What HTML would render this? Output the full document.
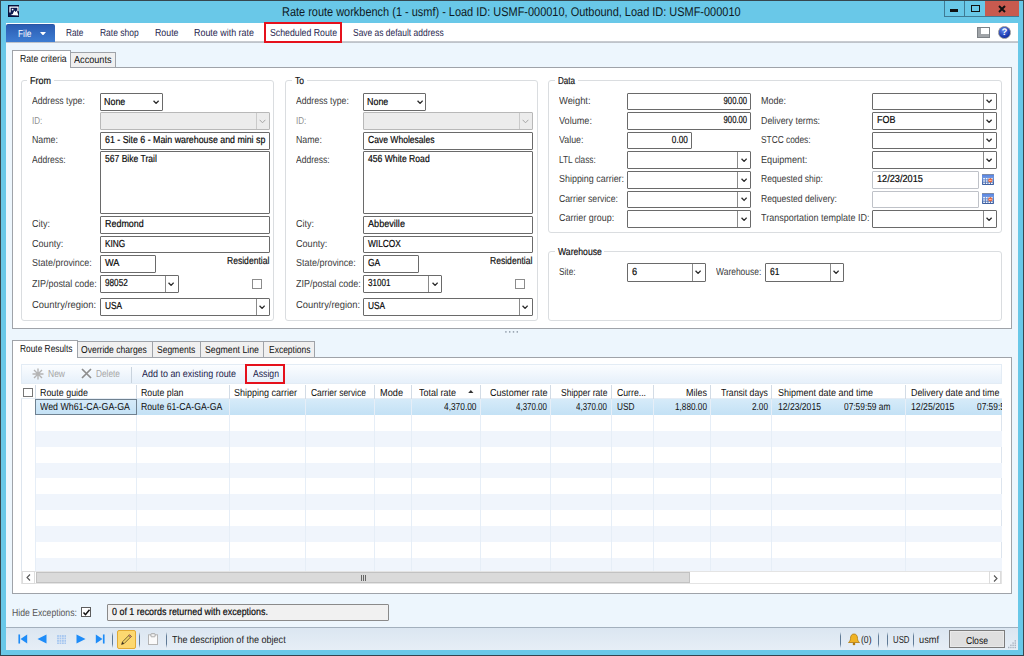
<!DOCTYPE html><html><head><meta charset="utf-8"><title>Rate route workbench</title><style>
*{box-sizing:border-box;margin:0;padding:0}
html,body{width:1024px;height:656px;overflow:hidden}
body{background:#69c8e8;font-family:"Liberation Sans",sans-serif;font-size:10.2px;text-rendering:geometricPrecision;color:#1e1e1e;position:relative}
.a{position:absolute}
.t{position:absolute;white-space:nowrap;line-height:13.5px;height:14px;transform-origin:0 0;transform:scaleX(0.9)}
.lbl{position:absolute;white-space:nowrap;line-height:13.5px;height:14px;color:#3a3a3a;transform-origin:0 0;transform:scaleX(0.9)}
.dis{color:#8f8f8f}
.f{position:absolute;background:#fff;border:1px solid #6a6a6a;border-radius:1px;height:17.5px;line-height:15.5px;padding-left:4px;white-space:nowrap;overflow:hidden;color:#0a0a0a;-webkit-text-stroke:0.2px #0a0a0a}
.f span{display:inline-block;transform-origin:0 50%;transform:scaleX(0.9)}
.f.r{text-align:right;padding-right:3px;padding-left:0}
.f.r span{transform-origin:100% 50%}
.f.d{background:#ececec;border-color:#b8b8b8}
.f.lt{border-color:#bfc2c8}
.dd{position:absolute;top:0;bottom:0;right:0;width:13px;border-left:1px solid #8a8a8a}
.dd.nb{border-left:none}
.dd svg{position:absolute;left:2.3px;top:5.8px}
.dd.nb svg{left:4.4px;top:6.6px}
.gb{position:absolute;border:1px solid #dadde0;border-radius:3px}
.gbl{position:absolute;background:#fff;padding:0 3px;line-height:13.5px;height:14px;color:#111;white-space:nowrap;-webkit-text-stroke:0.2px #111}
.gbl span{display:inline-block;transform-origin:0 50%}
.tab{position:absolute;border:1px solid #9fa3a9;border-bottom:none;background:#f0f0f0;line-height:12.5px;white-space:nowrap;color:#111}
.tab.sel{background:#fff}
.tab span{position:absolute;top:0;transform-origin:0 0}
.page{position:absolute;background:#fff;border:1px solid #9fa3a9}
.cb{position:absolute;width:10px;height:10px;border:1px solid #5e5e5e;background:#fff}
.m{position:absolute;top:26.8px;font-size:10.2px;line-height:13.5px;white-space:nowrap;color:#26264e;transform-origin:0 0}
.vl{position:absolute;width:1px;background:#e6eef7}
.h{position:absolute;top:387.7px;line-height:12.5px;white-space:nowrap;color:#111;transform-origin:0 0}
.c{position:absolute;top:401.7px;line-height:12.5px;white-space:nowrap;color:#111;transform-origin:0 0}
</style></head><body>
<div class="a" style="left:0;top:0;width:1024px;height:656px;border:1px solid #36474f;border-bottom:1.3px solid #34444e"></div>
<div class="a" style="left:7.7px;top:5.1px;width:11.8px;height:11.8px;background:#0c1a50;border:1px solid #081038"></div>
<svg class="a" style="left:7.7px;top:5.1px" width="12" height="12" viewBox="0 0 12 12"><path d="M2 7.5V2.2h8v4" stroke="#fff" stroke-width="1.3" fill="none"/><path d="M2.5 10l2.2-1 1.6-3.6 1.4 1.6 1-1.6 1.8 5.2z" fill="#fff"/><circle cx="4.6" cy="4.6" r="0.9" fill="#fff"/></svg>
<div class="t" style="left:282.4px;top:2.7px;font-size:12.6px;transform:scaleX(0.87);line-height:18px;height:18px;color:#0e1a24">Rate route workbench (1 - usmf) - Load ID: USMF-000010, Outbound, Load ID: USMF-000010</div>
<div class="a" style="left:943.5px;top:1px;width:75.5px;height:15.5px;border:1px solid #3f7a94;border-top:none;border-right:none"></div>
<div class="a" style="left:964px;top:1px;width:1px;height:15px;background:#3f7a94"></div>
<div class="a" style="left:984.5px;top:1px;width:34.5px;height:15px;background:#c85a4f"></div>
<div class="a" style="left:950px;top:8.5px;width:8px;height:3px;background:#111"></div>
<div class="a" style="left:971px;top:5px;width:8.5px;height:6.5px;border:1.6px solid #111"></div>
<svg class="a" style="left:998px;top:4.5px" width="8" height="8" viewBox="0 0 8 8"><path d="M1 1l6 6M7 1L1 7" stroke="#111" stroke-width="2"/></svg>
<div class="a" style="left:6px;top:23px;width:1012px;height:19.5px;background:linear-gradient(#fff 0,#fff 89%,#b0b5bc 94%,#c9ced5 100%)"></div>
<div class="a" style="left:6px;top:24px;width:49px;height:17.5px;background:linear-gradient(#2b5db3,#3e7dd2);border-radius:2px 2px 0 0;border-top:1px solid #2a55a3"></div>
<div class="m" style="transform:scaleX(0.821);left:17.5px;top:27.5px;color:#fff;">File</div>
<svg class="a" style="left:39.8px;top:31.8px" width="6" height="3.5"><path d="M0 0h6l-3 3.5z" fill="#fff"/></svg>
<div class="m" style="transform:scaleX(0.812);left:66.2px;">Rate</div>
<div class="m" style="transform:scaleX(0.832);left:99.5px;">Rate shop</div>
<div class="m" style="transform:scaleX(0.863);left:154.5px;">Route</div>
<div class="m" style="transform:scaleX(0.875);left:193.7px;">Route with rate</div>
<div class="m" style="transform:scaleX(0.859);left:269.5px;">Scheduled Route</div>
<div class="m" style="transform:scaleX(0.829);left:352.5px;">Save as default address</div>
<div class="a" style="left:264px;top:21.8px;width:78.2px;height:20.8px;border:2.3px solid #e5111c"></div>
<div class="a" style="left:977px;top:27px;width:12.5px;height:11px;border:1px solid #7c8186;background:#fff"><div class="a" style="left:0;top:0;width:3px;height:9px;background:#a0a4a8"></div><div class="a" style="left:0;bottom:0;width:10.5px;height:3px;background:#a0a4a8"></div></div>
<div class="a" style="left:997.8px;top:25.8px;width:13px;height:13px;border-radius:7px;background:radial-gradient(circle at 40% 30%,#5f86ee,#1432a8 70%);border:1.7px solid #8e9096"></div>
<div class="t" style="left:1001.6px;top:25.8px;font-size:9.5px;font-weight:bold;color:#fff;line-height:13px;transform:none">?</div>
<div class="a" style="left:6px;top:42.5px;width:1012px;height:585px;background:#edf6fd"></div>
<div class="page" style="left:12px;top:67px;width:1000px;height:262.2px"></div>
<div class="tab" style="left:70px;top:52px;width:46px;height:15px"><span style="left:2.700000000000003px;top:1.8px;transform:scaleX(0.894)">Accounts</span></div>
<div class="tab sel" style="left:12px;top:50px;width:59px;height:18px"><span style="left:6.5px;top:3.1px;transform:scaleX(0.849)">Rate criteria</span></div>
<div class="gb" style="left:21px;top:79.5px;width:253px;height:241.1px"></div>
<div class="gbl" style="left:27.1px;top:74.6px;width:27.0px"><span style="transform:scaleX(0.883)">From</span></div>
<div class="lbl " style="transform:scaleX(0.848);left:32.3px;top:95.2px;">Address type:</div>
<div class="f " style="left:100px;top:92.5px;width:63px;height:18px;padding-left:2.8px;padding-top:1.9px"><span style="transform:scaleX(0.874)">None</span><div class="dd nb"><svg width="6.2" height="4.4" viewBox="0 0 7 5"><path d="M0.6 0.8l2.9 3L6.4 0.8" stroke="#2c2c2c" stroke-width="1.5" fill="none"/></svg></div></div>
<div class="lbl dis" style="transform:scaleX(0.79);left:32.3px;top:114.7px;">ID:</div>
<div class="f d" style="left:100px;top:112px;width:170px;height:17.5px;"><div class="dd" style="border-color:#cacaca"><svg width="7" height="5" viewBox="0 0 7 5"><path d="M0.6 0.8l2.9 3L6.4 0.8" stroke="#a5a5a5" stroke-width="1" fill="none"/></svg></div></div>
<div class="lbl " style="transform:scaleX(0.865);left:32.3px;top:134.2px;">Name:</div>
<div class="f " style="left:100px;top:132px;width:170px;height:17.5px;"><span style="transform:scaleX(0.866)">61 - Site 6 - Main warehouse and mini sp</span></div>
<div class="lbl " style="transform:scaleX(0.837);left:32.3px;top:153.7px;">Address:</div>
<div class="f " style="left:100px;top:151.2px;width:170px;height:63px;"><span style="transform:scaleX(0.84)">567 Bike Trail</span></div>
<div class="lbl " style="transform:scaleX(0.877);left:32.3px;top:218.4px;">City:</div>
<div class="f " style="left:100px;top:216px;width:170px;height:17.5px;"><span style="transform:scaleX(0.877)">Redmond</span></div>
<div class="lbl " style="transform:scaleX(0.89);left:32.3px;top:237.9px;">County:</div>
<div class="f " style="left:100px;top:235.6px;width:170px;height:17.5px;"><span style="transform:scaleX(0.814)">KING</span></div>
<div class="lbl " style="transform:scaleX(0.88);left:32.3px;top:257.4px;">State/province:</div>
<div class="f " style="left:100px;top:255.1px;width:56px;height:17.5px;"><span style="transform:scaleX(0.897)">WA</span></div>
<div class="lbl " style="transform:scaleX(0.879);left:32.3px;top:277.5px;">ZIP/postal code:</div>
<div class="f " style="left:100px;top:275.3px;width:79px;height:17.5px;"><span style="transform:scaleX(0.804)">98052</span><div class="dd"><svg width="6.2" height="4.4" viewBox="0 0 7 5"><path d="M0.6 0.8l2.9 3L6.4 0.8" stroke="#2c2c2c" stroke-width="1.5" fill="none"/></svg></div></div>
<div class="lbl " style="transform:scaleX(0.921);left:32.3px;top:298.6px;">Country/region:</div>
<div class="f " style="left:100px;top:298px;width:170px;height:18px;"><span style="transform:scaleX(0.815)">USA</span><div class="dd"><svg width="6.2" height="4.4" viewBox="0 0 7 5"><path d="M0.6 0.8l2.9 3L6.4 0.8" stroke="#2c2c2c" stroke-width="1.5" fill="none"/></svg></div></div>
<div class="t" style="transform:scaleX(0.84);left:226.8px;top:255.2px;color:#111;-webkit-text-stroke:0.2px #111;">Residential</div>
<div class="cb" style="left:252.4px;top:279px;border-color:#8c8c8c"></div>
<div class="gb" style="left:285px;top:79.5px;width:253px;height:241.1px"></div>
<div class="gbl" style="left:291.7px;top:74.6px;width:15.0px"><span style="transform:scaleX(0.835)">To</span></div>
<div class="lbl " style="transform:scaleX(0.848);left:296px;top:95.2px;">Address type:</div>
<div class="f " style="left:363.4px;top:92.5px;width:63px;height:18px;padding-left:2.8px;padding-top:1.9px"><span style="transform:scaleX(0.874)">None</span><div class="dd nb"><svg width="6.2" height="4.4" viewBox="0 0 7 5"><path d="M0.6 0.8l2.9 3L6.4 0.8" stroke="#2c2c2c" stroke-width="1.5" fill="none"/></svg></div></div>
<div class="lbl dis" style="transform:scaleX(0.79);left:296px;top:114.7px;">ID:</div>
<div class="f d" style="left:363.4px;top:112px;width:169.60000000000002px;height:17.5px;"><div class="dd" style="border-color:#cacaca"><svg width="7" height="5" viewBox="0 0 7 5"><path d="M0.6 0.8l2.9 3L6.4 0.8" stroke="#a5a5a5" stroke-width="1" fill="none"/></svg></div></div>
<div class="lbl " style="transform:scaleX(0.865);left:296px;top:134.2px;">Name:</div>
<div class="f " style="left:363.4px;top:132px;width:169.60000000000002px;height:17.5px;"><span style="transform:scaleX(0.839)">Cave Wholesales</span></div>
<div class="lbl " style="transform:scaleX(0.837);left:296px;top:153.7px;">Address:</div>
<div class="f " style="left:363.4px;top:151.2px;width:169.60000000000002px;height:63px;"><span style="transform:scaleX(0.844)">456 White Road</span></div>
<div class="lbl " style="transform:scaleX(0.877);left:296px;top:218.4px;">City:</div>
<div class="f " style="left:363.4px;top:216px;width:169.60000000000002px;height:17.5px;"><span style="transform:scaleX(0.894)">Abbeville</span></div>
<div class="lbl " style="transform:scaleX(0.89);left:296px;top:237.9px;">County:</div>
<div class="f " style="left:363.4px;top:235.6px;width:169.60000000000002px;height:17.5px;"><span style="transform:scaleX(0.818)">WILCOX</span></div>
<div class="lbl " style="transform:scaleX(0.88);left:296px;top:257.4px;">State/province:</div>
<div class="f " style="left:363.4px;top:255.1px;width:56px;height:17.5px;"><span style="transform:scaleX(0.835)">GA</span></div>
<div class="lbl " style="transform:scaleX(0.879);left:296px;top:277.5px;">ZIP/postal code:</div>
<div class="f " style="left:363.4px;top:275.3px;width:79px;height:17.5px;"><span style="transform:scaleX(0.797)">31001</span><div class="dd"><svg width="6.2" height="4.4" viewBox="0 0 7 5"><path d="M0.6 0.8l2.9 3L6.4 0.8" stroke="#2c2c2c" stroke-width="1.5" fill="none"/></svg></div></div>
<div class="lbl " style="transform:scaleX(0.921);left:296px;top:298.6px;">Country/region:</div>
<div class="f " style="left:363.4px;top:298px;width:169.60000000000002px;height:18px;"><span style="transform:scaleX(0.815)">USA</span><div class="dd"><svg width="6.2" height="4.4" viewBox="0 0 7 5"><path d="M0.6 0.8l2.9 3L6.4 0.8" stroke="#2c2c2c" stroke-width="1.5" fill="none"/></svg></div></div>
<div class="t" style="transform:scaleX(0.84);left:489.8px;top:255.2px;color:#111;-webkit-text-stroke:0.2px #111;">Residential</div>
<div class="cb" style="left:515.4px;top:279px;border-color:#8c8c8c"></div>
<div class="gb" style="left:548px;top:79.5px;width:454px;height:153px"></div>
<div class="gbl" style="left:554.5px;top:74.6px;width:23.0px"><span style="transform:scaleX(0.789)">Data</span></div>
<div class="lbl " style="transform:scaleX(0.919);left:559px;top:95.3px;">Weight:</div>
<div class="lbl " style="transform:scaleX(0.895);left:559px;top:114.8px;">Volume:</div>
<div class="lbl " style="transform:scaleX(0.87);left:559px;top:134.3px;">Value:</div>
<div class="lbl " style="transform:scaleX(0.812);left:559px;top:153.8px;">LTL class:</div>
<div class="lbl " style="transform:scaleX(0.877);left:559px;top:173.3px;">Shipping carrier:</div>
<div class="lbl " style="transform:scaleX(0.853);left:559px;top:192.8px;">Carrier service:</div>
<div class="lbl " style="transform:scaleX(0.877);left:559px;top:212.3px;">Carrier group:</div>
<div class="f r" style="left:627px;top:92.5px;width:124.3px;height:17.5px;"><span style="transform:scaleX(0.757)">900.00</span></div>
<div class="f r" style="left:627px;top:112px;width:124.3px;height:17.5px;"><span style="transform:scaleX(0.757)">900.00</span></div>
<div class="f r" style="left:627px;top:131.6px;width:64.7px;height:17.5px;"><span style="transform:scaleX(0.806)">0.00</span></div>
<div class="f " style="left:627px;top:151.2px;width:124.3px;height:17.5px;"><div class="dd"><svg width="6.2" height="4.4" viewBox="0 0 7 5"><path d="M0.6 0.8l2.9 3L6.4 0.8" stroke="#2c2c2c" stroke-width="1.5" fill="none"/></svg></div></div>
<div class="f " style="left:627px;top:171px;width:124.3px;height:17.5px;"><div class="dd"><svg width="6.2" height="4.4" viewBox="0 0 7 5"><path d="M0.6 0.8l2.9 3L6.4 0.8" stroke="#2c2c2c" stroke-width="1.5" fill="none"/></svg></div></div>
<div class="f " style="left:627px;top:190.5px;width:124.3px;height:17.5px;"><div class="dd"><svg width="6.2" height="4.4" viewBox="0 0 7 5"><path d="M0.6 0.8l2.9 3L6.4 0.8" stroke="#2c2c2c" stroke-width="1.5" fill="none"/></svg></div></div>
<div class="f " style="left:627px;top:210px;width:124.3px;height:17.5px;"><div class="dd"><svg width="6.2" height="4.4" viewBox="0 0 7 5"><path d="M0.6 0.8l2.9 3L6.4 0.8" stroke="#2c2c2c" stroke-width="1.5" fill="none"/></svg></div></div>
<div class="lbl " style="transform:scaleX(0.885);left:760.7px;top:95.3px;">Mode:</div>
<div class="lbl " style="transform:scaleX(0.869);left:760.7px;top:114.8px;">Delivery terms:</div>
<div class="lbl " style="transform:scaleX(0.819);left:760.7px;top:134.3px;">STCC codes:</div>
<div class="lbl " style="transform:scaleX(0.897);left:760.7px;top:153.8px;">Equipment:</div>
<div class="lbl " style="transform:scaleX(0.84);left:760.7px;top:173.3px;">Requested ship:</div>
<div class="lbl " style="transform:scaleX(0.844);left:760.7px;top:192.8px;">Requested delivery:</div>
<div class="lbl " style="transform:scaleX(0.882);left:760.7px;top:212.3px;">Transportation template ID:</div>
<div class="f " style="left:872px;top:92.5px;width:125.2px;height:17.5px;"><div class="dd"><svg width="6.2" height="4.4" viewBox="0 0 7 5"><path d="M0.6 0.8l2.9 3L6.4 0.8" stroke="#2c2c2c" stroke-width="1.5" fill="none"/></svg></div></div>
<div class="f " style="left:872px;top:112px;width:125.2px;height:17.5px;"><span style="transform:scaleX(0.878)">FOB</span><div class="dd"><svg width="6.2" height="4.4" viewBox="0 0 7 5"><path d="M0.6 0.8l2.9 3L6.4 0.8" stroke="#2c2c2c" stroke-width="1.5" fill="none"/></svg></div></div>
<div class="f " style="left:872px;top:131.6px;width:125.2px;height:17.5px;"><div class="dd"><svg width="6.2" height="4.4" viewBox="0 0 7 5"><path d="M0.6 0.8l2.9 3L6.4 0.8" stroke="#2c2c2c" stroke-width="1.5" fill="none"/></svg></div></div>
<div class="f " style="left:872px;top:151.2px;width:125.2px;height:17.5px;"><div class="dd"><svg width="6.2" height="4.4" viewBox="0 0 7 5"><path d="M0.6 0.8l2.9 3L6.4 0.8" stroke="#2c2c2c" stroke-width="1.5" fill="none"/></svg></div></div>
<div class="f lt" style="left:872px;top:171px;width:107px;height:17.5px;"><span style="transform:scaleX(0.899)">12/23/2015</span></div>
<div class="f lt" style="left:872px;top:190.5px;width:107px;height:17.5px;"></div>
<div class="f " style="left:872px;top:210px;width:125.2px;height:17.5px;"><div class="dd"><svg width="6.2" height="4.4" viewBox="0 0 7 5"><path d="M0.6 0.8l2.9 3L6.4 0.8" stroke="#2c2c2c" stroke-width="1.5" fill="none"/></svg></div></div>
<svg class="a" style="left:982px;top:174px" width="12" height="11" viewBox="0 0 12 11"><defs><linearGradient id="cg1" x1="0" y1="0" x2="0" y2="1"><stop offset="0" stop-color="#4a7be6"/><stop offset="0.3" stop-color="#6f96e0"/><stop offset="1" stop-color="#3a5c9c"/></linearGradient></defs><rect x="0" y="0" width="12" height="11" rx="0.8" fill="url(#cg1)"/><rect x="0" y="0" width="12" height="0.8" fill="#8a8f98"/><g fill="#f4f7fd"><rect x="1.2" y="4.0" width="1.7" height="1.4"/><rect x="1.2" y="6.3" width="1.7" height="1.4"/><rect x="1.2" y="8.6" width="1.7" height="1.4"/><rect x="3.8" y="4.0" width="1.7" height="1.4"/><rect x="3.8" y="6.3" width="1.7" height="1.4"/><rect x="3.8" y="8.6" width="1.7" height="1.4"/><rect x="6.4" y="4.0" width="1.7" height="1.4"/><rect x="6.4" y="6.3" width="1.7" height="1.4"/><rect x="6.4" y="8.6" width="1.7" height="1.4"/><rect x="9.0" y="4.0" width="1.7" height="1.4"/><rect x="9.0" y="6.3" width="1.7" height="1.4"/><rect x="9.0" y="8.6" width="1.7" height="1.4"/></g><circle cx="8.3" cy="6.4" r="2.1" fill="#ee6a3c"/><rect x="7" y="6" width="2.6" height="0.8" fill="#fbd0bd"/></svg>
<svg class="a" style="left:982px;top:193.3px" width="12" height="11" viewBox="0 0 12 11"><defs><linearGradient id="cg2" x1="0" y1="0" x2="0" y2="1"><stop offset="0" stop-color="#4a7be6"/><stop offset="0.3" stop-color="#6f96e0"/><stop offset="1" stop-color="#3a5c9c"/></linearGradient></defs><rect x="0" y="0" width="12" height="11" rx="0.8" fill="url(#cg2)"/><rect x="0" y="0" width="12" height="0.8" fill="#8a8f98"/><g fill="#f4f7fd"><rect x="1.2" y="4.0" width="1.7" height="1.4"/><rect x="1.2" y="6.3" width="1.7" height="1.4"/><rect x="1.2" y="8.6" width="1.7" height="1.4"/><rect x="3.8" y="4.0" width="1.7" height="1.4"/><rect x="3.8" y="6.3" width="1.7" height="1.4"/><rect x="3.8" y="8.6" width="1.7" height="1.4"/><rect x="6.4" y="4.0" width="1.7" height="1.4"/><rect x="6.4" y="6.3" width="1.7" height="1.4"/><rect x="6.4" y="8.6" width="1.7" height="1.4"/><rect x="9.0" y="4.0" width="1.7" height="1.4"/><rect x="9.0" y="6.3" width="1.7" height="1.4"/><rect x="9.0" y="8.6" width="1.7" height="1.4"/></g><circle cx="8.3" cy="6.4" r="2.1" fill="#ee6a3c"/><rect x="7" y="6" width="2.6" height="0.8" fill="#fbd0bd"/></svg>
<div class="gb" style="left:548px;top:251.2px;width:454px;height:69.5px"></div>
<div class="gbl" style="left:554.5px;top:246.2px;width:49.9px"><span style="transform:scaleX(0.848)">Warehouse</span></div>
<div class="lbl " style="transform:scaleX(0.813);left:559.4px;top:266.2px;">Site:</div>
<div class="f " style="left:627px;top:263.2px;width:79px;height:18.8px;padding-top:0.7px"><span style="transform:scaleX(0.9)">6</span><div class="dd"><svg width="6.2" height="4.4" viewBox="0 0 7 5"><path d="M0.6 0.8l2.9 3L6.4 0.8" stroke="#2c2c2c" stroke-width="1.5" fill="none"/></svg></div></div>
<div class="lbl " style="transform:scaleX(0.831);left:715.8px;top:266.2px;">Warehouse:</div>
<div class="f " style="left:765px;top:263.2px;width:79px;height:18.8px;padding-top:0.7px"><span style="transform:scaleX(0.829)">61</span><div class="dd"><svg width="6.2" height="4.4" viewBox="0 0 7 5"><path d="M0.6 0.8l2.9 3L6.4 0.8" stroke="#2c2c2c" stroke-width="1.5" fill="none"/></svg></div></div>
<svg class="a" style="left:505px;top:331.4px" width="14" height="2" viewBox="0 0 14 2"><g fill="#8894a2"><rect x="0.2" y="0.2" width="1.4" height="1.4"/><rect x="4" y="0.2" width="1.4" height="1.4"/><rect x="7.8" y="0.2" width="1.4" height="1.4"/><rect x="11.6" y="0.2" width="1.4" height="1.4"/></g></svg>
<div class="page" style="left:12px;top:356.5px;width:1000px;height:237.3px"></div>
<div class="tab" style="left:76.5px;top:341.3px;width:76px;height:15.7px"><span style="left:3.700000000000003px;top:2.6px;transform:scaleX(0.841)">Override charges</span></div>
<div class="tab" style="left:151.5px;top:341.3px;width:49.5px;height:15.7px"><span style="left:4.199999999999989px;top:2.6px;transform:scaleX(0.834)">Segments</span></div>
<div class="tab" style="left:200px;top:341.3px;width:64px;height:15.7px"><span style="left:4px;top:2.6px;transform:scaleX(0.858)">Segment Line</span></div>
<div class="tab" style="left:263px;top:341.3px;width:52px;height:15.7px"><span style="left:4.5px;top:2.6px;transform:scaleX(0.832)">Exceptions</span></div>
<div class="tab sel" style="left:12px;top:340px;width:65.5px;height:17.5px"><span style="left:7px;top:3.2px;transform:scaleX(0.82)">Route Results</span></div>
<div class="a" style="left:21px;top:363.8px;width:981px;height:20.4px;background:linear-gradient(#fbfdff,#e6f0fa);border:1px solid #e3ecf5"></div>
<svg class="a" style="left:32px;top:367.5px" width="12" height="12" viewBox="0 0 12 12"><path d="M6 0.5v11M0.5 6h11M2 2l8 8M10 2l-8 8" stroke="#b4b4b4" stroke-width="1.4"/></svg>
<div class="t" style="transform:scaleX(0.833);left:47.5px;top:367.8px;color:#a6a6a6;">New</div>
<svg class="a" style="left:81px;top:368px" width="11" height="11" viewBox="0 0 11 11"><path d="M1 1l9 9M10 1L1 10" stroke="#8e8e8e" stroke-width="1.7"/></svg>
<div class="t" style="transform:scaleX(0.814);left:95.5px;top:367.8px;color:#a6a6a6;">Delete</div>
<div class="a" style="left:131px;top:366.5px;width:1px;height:16px;background:#c9d3dd"></div>
<div class="t" style="transform:scaleX(0.879);left:142px;top:367.8px;color:#1b1b4a;">Add to an existing route</div>
<div class="t" style="transform:scaleX(0.849);left:252.5px;top:367.8px;color:#1b1b4a;">Assign</div>
<div class="a" style="left:245px;top:363.6px;width:40.2px;height:20.8px;border:2.3px solid #e5111c"></div>
<div class="a" style="left:21px;top:384.5px;width:981px;height:186.5px;background:#fff;border-left:1px solid #dde5ee;border-right:1px solid #dde5ee"></div>
<div class="a" style="left:36px;top:430.7px;width:966px;height:15.9px;background:#f0f5fc"></div>
<div class="a" style="left:36px;top:462.5px;width:966px;height:15.9px;background:#f0f5fc"></div>
<div class="a" style="left:36px;top:494.3px;width:966px;height:15.9px;background:#f0f5fc"></div>
<div class="a" style="left:36px;top:526.1px;width:966px;height:15.9px;background:#f0f5fc"></div>
<div class="a" style="left:36px;top:557.9px;width:966px;height:13.4px;background:#f0f5fc"></div>
<div class="a" style="left:36px;top:398.8px;width:966px;height:16px;background:linear-gradient(#d6ebf9,#c3e1f5)"></div>
<div class="a" style="left:21px;top:384.2px;width:981px;height:14.6px;background:#fff;border-bottom:1px solid #e6edf5"></div>
<div class="vl" style="left:34.9px;top:399px;height:172px"></div>
<div class="vl" style="left:34.9px;top:385px;height:14px;background:#d3dce6"></div>
<div class="vl" style="left:135.5px;top:399px;height:172px"></div>
<div class="vl" style="left:135.5px;top:385px;height:14px;background:#d3dce6"></div>
<div class="vl" style="left:229px;top:399px;height:172px"></div>
<div class="vl" style="left:229px;top:385px;height:14px;background:#d3dce6"></div>
<div class="vl" style="left:304.9px;top:399px;height:172px"></div>
<div class="vl" style="left:304.9px;top:385px;height:14px;background:#d3dce6"></div>
<div class="vl" style="left:373.9px;top:399px;height:172px"></div>
<div class="vl" style="left:373.9px;top:385px;height:14px;background:#d3dce6"></div>
<div class="vl" style="left:411px;top:399px;height:172px"></div>
<div class="vl" style="left:411px;top:385px;height:14px;background:#d3dce6"></div>
<div class="vl" style="left:480.4px;top:399px;height:172px"></div>
<div class="vl" style="left:480.4px;top:385px;height:14px;background:#d3dce6"></div>
<div class="vl" style="left:549.9px;top:399px;height:172px"></div>
<div class="vl" style="left:549.9px;top:385px;height:14px;background:#d3dce6"></div>
<div class="vl" style="left:611.4px;top:399px;height:172px"></div>
<div class="vl" style="left:611.4px;top:385px;height:14px;background:#d3dce6"></div>
<div class="vl" style="left:652.9px;top:399px;height:172px"></div>
<div class="vl" style="left:652.9px;top:385px;height:14px;background:#d3dce6"></div>
<div class="vl" style="left:710.4px;top:399px;height:172px"></div>
<div class="vl" style="left:710.4px;top:385px;height:14px;background:#d3dce6"></div>
<div class="vl" style="left:771.4px;top:399px;height:172px"></div>
<div class="vl" style="left:771.4px;top:385px;height:14px;background:#d3dce6"></div>
<div class="vl" style="left:904.9px;top:399px;height:172px"></div>
<div class="vl" style="left:904.9px;top:385px;height:14px;background:#d3dce6"></div>
<div class="cb" style="left:23px;top:387.5px;height:9.5px;border-color:#777"></div>
<div class="a" style="left:35px;top:398.8px;width:102px;height:16.4px;border:1px solid #6f8190"></div>
<div class="h" style="transform:scaleX(0.873);left:40px;">Route guide</div>
<div class="h" style="transform:scaleX(0.861);left:141.2px;">Route plan</div>
<div class="h" style="transform:scaleX(0.882);left:234px;">Shipping carrier</div>
<div class="h" style="transform:scaleX(0.829);left:310.5px;">Carrier service</div>
<div class="h" style="transform:scaleX(0.902);left:380px;">Mode</div>
<div class="h" style="transform:scaleX(0.882);left:418.5px;">Total rate</div>
<div class="h" style="transform:scaleX(0.89);left:489.5px;">Customer rate</div>
<div class="h" style="transform:scaleX(0.837);left:560.5px;">Shipper rate</div>
<div class="h" style="transform:scaleX(0.853);left:617px;">Curre...</div>
<div class="h" style="transform:scaleX(0.882);left:686px;">Miles</div>
<div class="h" style="transform:scaleX(0.852);left:721px;">Transit days</div>
<div class="h" style="transform:scaleX(0.882);left:777.5px;">Shipment date and time</div>
<div class="h" style="transform:scaleX(0.872);left:910.5px;">Delivery date and time</div>
<svg class="a" style="left:468px;top:389.6px" width="5.6" height="3.2"><path d="M0 3.2h5.6L2.8 0z" fill="#333"/></svg>
<div class="c" style="transform:scaleX(0.865);left:40px;">Wed Wh61-CA-GA-GA</div>
<div class="c" style="transform:scaleX(0.854);left:141.2px;">Route 61-CA-GA-GA</div>
<div class="c" style="transform:scaleX(0.819);left:444px;">4,370.00</div>
<div class="c" style="transform:scaleX(0.781);left:516px;">4,370.00</div>
<div class="c" style="transform:scaleX(0.781);left:576px;">4,370.00</div>
<div class="c" style="transform:scaleX(0.813);left:617px;">USD</div>
<div class="c" style="transform:scaleX(0.806);left:675px;">1,880.00</div>
<div class="c" style="transform:scaleX(0.806);left:752px;">2.00</div>
<div class="c" style="transform:scaleX(0.842);left:777.5px;">12/23/2015</div>
<div class="c" style="transform:scaleX(0.82);left:843.5px;">07:59:59 am</div>
<div class="c" style="transform:scaleX(0.852);left:910.5px;">12/25/2015</div>
<div class="a" style="left:976.5px;top:400px;width:25px;height:14px;overflow:hidden"><div class="c" style="left:0;top:1.7px;transform:scaleX(0.82)">07:59:59 am</div></div>
<div class="a" style="left:21px;top:571.3px;width:981px;height:12.3px;background:#fff;border:1px solid #e4e4e4"></div>
<div class="a" style="left:35.5px;top:571.8px;width:654px;height:11.4px;background:#dadada;border:1px solid #c2c2c2"></div>
<div class="a" style="left:989px;top:571.3px;width:12px;height:12.3px;border:1px solid #dcdcdc;background:#fff"></div>
<div class="a" style="left:21.5px;top:571.3px;width:13.5px;height:12.3px;border:1px solid #dcdcdc;background:#fff"></div>
<svg class="a" style="left:26px;top:574.2px" width="5" height="7" viewBox="0 0 5 7"><path d="M4 0.5L1 3.5l3 3" stroke="#555" stroke-width="1.1" fill="none"/></svg>
<svg class="a" style="left:992.5px;top:574.5px" width="5" height="7" viewBox="0 0 5 7"><path d="M1 0.5l3 3-3 3" stroke="#555" stroke-width="1.1" fill="none"/></svg>
<div class="a" style="left:361px;top:575px;width:5px;height:6px;background:repeating-linear-gradient(90deg,#666 0 1px,transparent 1px 2px)"></div>
<div class="lbl" style="transform:scaleX(0.849);left:12.1px;top:606.6px;color:#555;">Hide Exceptions:</div>
<div class="cb" style="left:81px;top:607px"></div>
<svg class="a" style="left:81.5px;top:607.5px" width="9" height="9" viewBox="0 0 9 9"><path d="M1.5 4.5l2 2.2L7.5 1.8" stroke="#111" stroke-width="1.5" fill="none"/></svg>
<div class="f" style="left:107px;top:603.5px;width:282px;height:17.8px;background:#f1f1f1;border-color:#8a8a8a;padding-left:4px"><span style="transform:scaleX(0.874)">0 of 1 records returned with exceptions.</span></div>
<div class="a" style="left:6px;top:626.9px;width:1012px;height:23.1px;background:linear-gradient(#dbe6f1,#e6eef6);border-top:1px solid #a3b0bd"></div>
<svg class="a" style="left:17.6px;top:634.3px" width="10" height="10" viewBox="0 0 12 11" preserveAspectRatio="none"><rect x="0.5" y="0.5" width="2" height="10" fill="#1e8cf8"/><path d="M11 0.5v10L3 5.5z" fill="#1e8cf8"/></svg>
<svg class="a" style="left:37.3px;top:634.3px" width="10" height="10" viewBox="0 0 10 11" preserveAspectRatio="none"><path d="M9.5 0.5v10L0.5 5.5z" fill="#1e8cf8"/></svg>
<svg class="a" style="left:56.9px;top:634.5px" width="9.6" height="9.6" viewBox="0 0 9.6 9.6"><g fill="#a5c6f0"><rect x="0.10" y="0.10" width="1.8" height="1.8"/><rect x="0.10" y="2.55" width="1.8" height="1.8"/><rect x="0.10" y="5.00" width="1.8" height="1.8"/><rect x="0.10" y="7.45" width="1.8" height="1.8"/><rect x="2.55" y="0.10" width="1.8" height="1.8"/><rect x="2.55" y="2.55" width="1.8" height="1.8"/><rect x="2.55" y="5.00" width="1.8" height="1.8"/><rect x="2.55" y="7.45" width="1.8" height="1.8"/><rect x="5.00" y="0.10" width="1.8" height="1.8"/><rect x="5.00" y="2.55" width="1.8" height="1.8"/><rect x="5.00" y="5.00" width="1.8" height="1.8"/><rect x="5.00" y="7.45" width="1.8" height="1.8"/><rect x="7.45" y="0.10" width="1.8" height="1.8"/><rect x="7.45" y="2.55" width="1.8" height="1.8"/><rect x="7.45" y="5.00" width="1.8" height="1.8"/><rect x="7.45" y="7.45" width="1.8" height="1.8"/></g></svg>
<svg class="a" style="left:76.3px;top:634.3px" width="10" height="10" viewBox="0 0 10 11" preserveAspectRatio="none"><path d="M0.5 0.5v10L9.5 5.5z" fill="#1e8cf8"/></svg>
<svg class="a" style="left:94.6px;top:634.3px" width="10" height="10" viewBox="0 0 12 11" preserveAspectRatio="none"><rect x="9.5" y="0.5" width="2" height="10" fill="#1e8cf8"/><path d="M1 0.5v10L9 5.5z" fill="#1e8cf8"/></svg>
<div class="a" style="left:112px;top:631.5px;width:1px;height:16px;background:linear-gradient(transparent,#5f7a96 25%,#5f7a96 75%,transparent)"></div>
<div class="a" style="left:139px;top:631.5px;width:1px;height:16px;background:linear-gradient(transparent,#5f7a96 25%,#5f7a96 75%,transparent)"></div>
<div class="a" style="left:166px;top:631.5px;width:1px;height:16px;background:linear-gradient(transparent,#5f7a96 25%,#5f7a96 75%,transparent)"></div>
<div class="a" style="left:840px;top:631.5px;width:1px;height:16px;background:linear-gradient(transparent,#5f7a96 25%,#5f7a96 75%,transparent)"></div>
<div class="a" style="left:878px;top:631.5px;width:1px;height:16px;background:linear-gradient(transparent,#5f7a96 25%,#5f7a96 75%,transparent)"></div>
<div class="a" style="left:887px;top:631.5px;width:1px;height:16px;background:linear-gradient(transparent,#5f7a96 25%,#5f7a96 75%,transparent)"></div>
<div class="a" style="left:913.3px;top:631.5px;width:1px;height:16px;background:linear-gradient(transparent,#5f7a96 25%,#5f7a96 75%,transparent)"></div>
<div class="a" style="left:117px;top:630px;width:19px;height:19px;background:#fdd870;border:1px solid #e2aa35;border-radius:2px"></div>
<svg class="a" style="left:120px;top:633px" width="13" height="13" viewBox="0 0 13 13"><path d="M1.6 11.4l0.9-2.6 7-7 1.7 1.7-7 7z" fill="#f5d565" stroke="#5a4a28" stroke-width="0.8"/><path d="M1.6 11.4l0.9-2.6 1.7 1.7z" fill="#3a3020"/><path d="M8.6 2.7l0.9-0.9 1.7 1.7-0.9 0.9z" fill="#e88a90" stroke="#5a4a28" stroke-width="0.5"/></svg>
<svg class="a" style="left:148px;top:633px" width="10" height="12" viewBox="0 0 10 12"><rect x="0.5" y="1.8" width="9" height="9.7" fill="#fafafa" stroke="#b4b4b4"/><rect x="2.8" y="0.6" width="4.4" height="3.2" rx="0.8" fill="#e2e2e2" stroke="#a2a2a2" stroke-width="0.8"/><circle cx="5" cy="2.2" r="0.8" fill="#fafafa"/></svg>
<div class="t" style="transform:scaleX(0.888);left:172.2px;top:634.4px;color:#222;">The description of the object</div>
<svg class="a" style="left:848px;top:633px" width="12" height="13" viewBox="0 0 12 13"><path d="M6 1c2.5 0 3.5 2 3.5 4.5 0 2 1 3 2 4H0.5c1-1 2-2 2-4C2.5 3 3.5 1 6 1z" fill="#f0b323" stroke="#b07a10" stroke-width="0.8"/><circle cx="6" cy="11" r="1.3" fill="#b07a10"/></svg>
<div class="t" style="transform:scaleX(0.842);left:860.5px;top:634.3px;color:#222;">(0)</div>
<div class="t" style="transform:scaleX(0.766);left:893px;top:634.3px;color:#222;">USD</div>
<div class="t" style="transform:scaleX(0.905);left:918.5px;top:634.3px;color:#222;">usmf</div>
<div class="a" style="left:949.3px;top:630.3px;width:56px;height:18.1px;background:#dfdfdf;border:1px solid #7c7c7c;box-shadow:inset 0 0 0 1px #e9e9e9"></div>
<div class="t" style="transform:scaleX(0.844);left:966.2px;top:634.7px;color:#111;">Close</div>
<svg class="a" style="left:1007.8px;top:640px" width="8.8" height="8.8" viewBox="0 0 8.8 8.8"><g fill="#a7b2bf"><rect x="6.6" y="0.2" width="1.4" height="1.4"/><rect x="6.6" y="2.4" width="1.4" height="1.4"/><rect x="4.4" y="2.4" width="1.4" height="1.4"/><rect x="6.6" y="4.6" width="1.4" height="1.4"/><rect x="4.4" y="4.6" width="1.4" height="1.4"/><rect x="2.2" y="4.6" width="1.4" height="1.4"/><rect x="6.6" y="6.8" width="1.4" height="1.4"/><rect x="4.4" y="6.8" width="1.4" height="1.4"/><rect x="2.2" y="6.8" width="1.4" height="1.4"/><rect x="-0.0" y="6.8" width="1.4" height="1.4"/></g></svg>
</body></html>
